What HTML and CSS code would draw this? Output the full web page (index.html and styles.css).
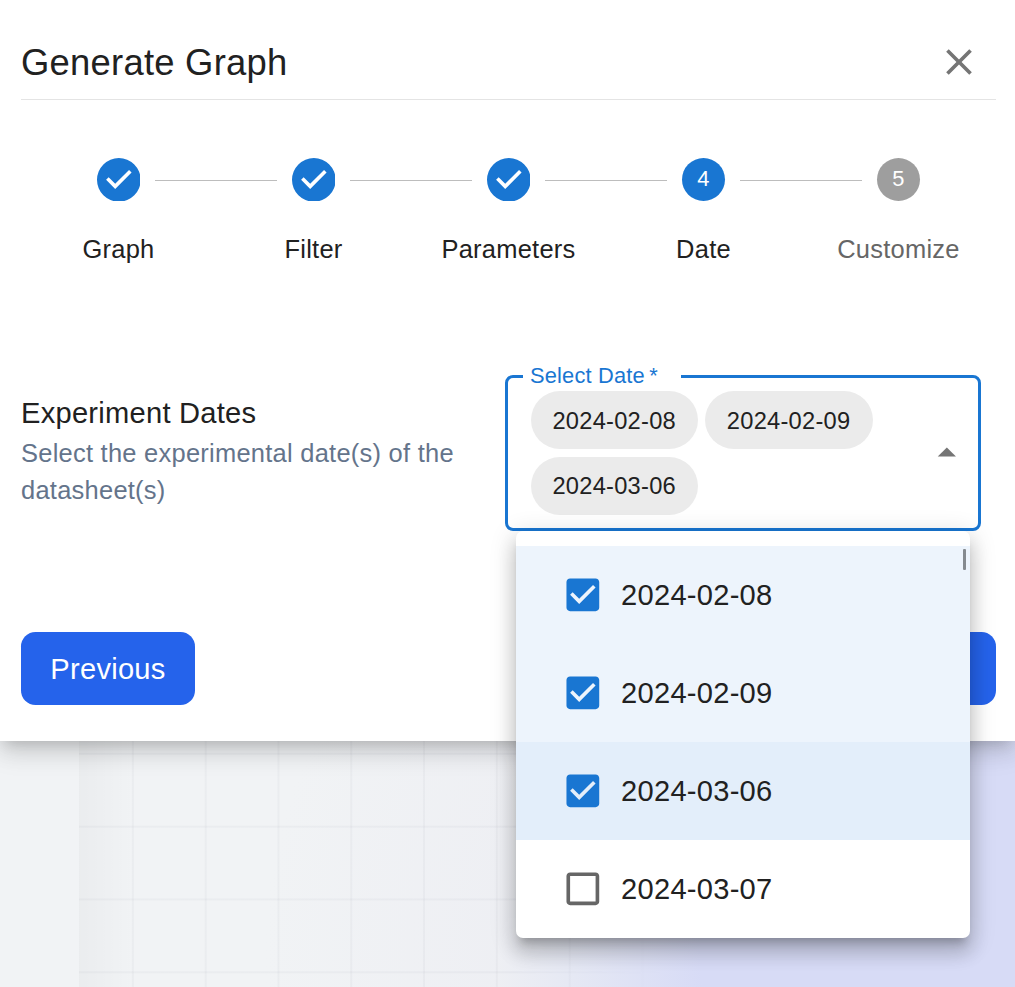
FILE: index.html
```html
<!DOCTYPE html>
<html lang="en">
<head>
<meta charset="utf-8">
<title>Generate Graph</title>
<link rel="stylesheet" href="styles.css">
</head>
<body>
<div class="backdrop"><div class="rail"></div><div class="canvas"><div class="grid"></div></div></div>
<main class="modal">
  <header class="header">
    <h1 class="title">Generate Graph</h1>
    <svg class="close" viewBox="0 0 24 24"><path d="M19 6.41 17.59 5 12 10.59 6.41 5 5 6.41 10.59 12 5 17.59 6.41 19 12 13.41 17.59 19 19 17.59 13.41 12z"/></svg>
  </header>
  <ol class="stepper">
    <li class="step"><svg class="step-icon" viewBox="0 0 24 24"><path d="M12 0a12 12 0 1 0 0 24 12 12 0 0 0 0-24zm-2 17l-5-5 1.4-1.4 3.6 3.6 7.6-7.6L19 8l-9 9z"/></svg><span class="step-label">Graph</span></li>
    <li class="step"><svg class="step-icon" viewBox="0 0 24 24"><path d="M12 0a12 12 0 1 0 0 24 12 12 0 0 0 0-24zm-2 17l-5-5 1.4-1.4 3.6 3.6 7.6-7.6L19 8l-9 9z"/></svg><span class="step-label">Filter</span></li>
    <li class="step"><svg class="step-icon" viewBox="0 0 24 24"><path d="M12 0a12 12 0 1 0 0 24 12 12 0 0 0 0-24zm-2 17l-5-5 1.4-1.4 3.6 3.6 7.6-7.6L19 8l-9 9z"/></svg><span class="step-label">Parameters</span></li>
    <li class="step"><span class="step-icon number">4</span><span class="step-label">Date</span></li>
    <li class="step pending"><span class="step-icon number">5</span><span class="step-label">Customize</span></li>
  </ol>
  <section class="field-row">
    <div class="description">
      <h2 class="field-title">Experiment Dates</h2>
      <p class="field-help">Select the experimental date(s) of the datasheet(s)</p>
    </div>
    <div class="select">
      <span class="select-label">Select Date&#8201;*</span>
      <div class="chips"><span class="chip">2024-02-08</span><span class="chip">2024-02-09</span><span class="chip">2024-03-06</span></div>
      <svg class="arrow" viewBox="0 0 24 24"><path d="M7 14l5-5 5 5z"/></svg>
      <div class="menu">
        <div class="option selected"><svg class="check" viewBox="0 0 24 24"><path d="M19 3H5c-1.11 0-2 .9-2 2v14c0 1.1.89 2 2 2h14c1.11 0 2-.9 2-2V5c0-1.1-.89-2-2-2zm-9 14l-5-5 1.41-1.41L10 14.17l7.59-7.59L19 8l-9 9z"/></svg>2024-02-08</div>
        <div class="option selected"><svg class="check" viewBox="0 0 24 24"><path d="M19 3H5c-1.11 0-2 .9-2 2v14c0 1.1.89 2 2 2h14c1.11 0 2-.9 2-2V5c0-1.1-.89-2-2-2zm-9 14l-5-5 1.41-1.41L10 14.17l7.59-7.59L19 8l-9 9z"/></svg>2024-02-09</div>
        <div class="option selected focused"><svg class="check" viewBox="0 0 24 24"><path d="M19 3H5c-1.11 0-2 .9-2 2v14c0 1.1.89 2 2 2h14c1.11 0 2-.9 2-2V5c0-1.1-.89-2-2-2zm-9 14l-5-5 1.41-1.41L10 14.17l7.59-7.59L19 8l-9 9z"/></svg>2024-03-06</div>
        <div class="option"><svg class="check" viewBox="0 0 24 24"><path d="M19 5v14H5V5h14m0-2H5c-1.1 0-2 .9-2 2v14c0 1.1.9 2 2 2h14c1.1 0 2-.9 2-2V5c0-1.1-.9-2-2-2z"/></svg>2024-03-07</div>
        <span class="thumb"></span>
      </div>
    </div>
  </section>
  <footer class="actions"><button class="button">Previous</button><button class="button next" aria-label="Next"></button></footer>
</main>
</body>
</html>
```
FILE: styles.css
```css
* { box-sizing: border-box; }
body {
  margin: 0;
  height: 987px;
  overflow: hidden;
  position: relative;
  font-family: "Liberation Sans", Arial, sans-serif;
  font-size: 29.12px;
  letter-spacing: 0.25px;
  color: #212121;
}
h1, h2, p, ol { margin: 0; padding: 0; font-weight: 400; }
svg { display: block; fill: currentColor; }

.backdrop {
  position: absolute;
  inset: 0;
  display: flex;
  background: #f1f3f5;
}
.rail { width: 79px; }
.canvas {
  flex: 1;
  background:
    linear-gradient(90deg, rgba(0, 0, 0, 0.028), transparent 55px),
    radial-gradient(ellipse 520px 460px at 861px 960px, #d7dbf6 0, #d7dbf6 46%, #e6e9f4 72%, rgba(237, 238, 243, 0.8) 85%, rgba(241, 243, 245, 0) 130%);
}
.grid {
  height: 100%;
  background:
    linear-gradient(90deg, transparent 53px, rgba(60, 65, 90, 0.035) 53px, rgba(60, 65, 90, 0.035) 55px, transparent 55px) 0 0 / 72.8px 100%,
    linear-gradient(180deg, transparent 25px, rgba(60, 65, 90, 0.035) 25px, rgba(60, 65, 90, 0.035) 27px, transparent 27px) 0 0 / 100% 72.8px;
  mask-image: linear-gradient(90deg, #000 430px, transparent 590px);
}

.modal {
  position: relative;
  height: 741px;
  padding: 0 19px 0 21px;
  background: #fff;
  box-shadow: 0 9px 12px -6px rgba(0, 0, 0, 0.13), 0 13px 24px 0 rgba(0, 0, 0, 0.1), 0 5.5px 25px 3.6px rgba(0, 0, 0, 0.07);
}
.header {
  height: 100px;
  padding: 26px 15px 0 0;
  display: flex;
  justify-content: space-between;
  align-items: center;
  border-bottom: 1px solid #e4e4e4;
}
.title { font-size: 36.4px; letter-spacing: 0.25px; line-height: 58px; }
.close { width: 44px; height: 44px; color: #757575; margin-top: -1px; }

.stepper {
  list-style: none;
  display: grid;
  grid-template-columns: repeat(5, 1fr);
  padding-top: 57.6px;
  height: 274px;
}
.step {
  position: relative;
  display: flex;
  flex-direction: column;
  align-items: center;
  gap: 29.4px;
  font-size: 25.48px;
}
.step + .step::before {
  content: "";
  position: absolute;
  left: calc(-50% + 36.5px);
  right: calc(50% + 36.5px);
  top: 22.4px;
  height: 1px;
  background: #bdbdbd;
}
.step-icon { width: 43.7px; height: 43.7px; color: #1976d2; }
.number {
  display: flex;
  align-items: center;
  justify-content: center;
  border-radius: 50%;
  background: #1976d2;
  color: #fff;
  font-size: 21.84px;
}
.step-label { line-height: 37px; }
.pending { color: #666; }
.pending .number { background: #9e9e9e; }

.field-row {
  display: flex;
  justify-content: space-between;
  height: 258px;
  padding: 1px 15px 0 0;
}
.description { width: 460px; padding-top: 16px; }
.field-title { font-size: 29.12px; line-height: 44px; }
.field-help { font-size: 25.48px; line-height: 37px; color: #64748b; }

.select {
  position: relative;
  width: 476px;
  height: 156px;
  border: 3px solid #1976d2;
  border-radius: 8px;
  padding: 13px 90px 0 23px;
}
.select-label {
  position: absolute;
  left: 15px;
  top: -15px;
  width: 158px;
  padding-left: 7px;
  line-height: 25px;
  background: #fff;
  color: #1976d2;
  font-size: 21.84px;
  letter-spacing: 0.18px;
}
.chips { display: flex; flex-wrap: wrap; gap: 7.3px 7px; }
.chip {
  height: 58.3px;
  width: 167.4px;
  padding: 2px 1px 0 0;
  border-radius: 29px;
  background: #ebebeb;
  display: flex;
  align-items: center;
  justify-content: center;
  font-size: 23.66px;
}
.arrow {
  position: absolute;
  right: 9.5px;
  top: 52.5px;
  width: 43.7px;
  height: 43.7px;
  color: #757575;
}
.menu {
  position: absolute;
  z-index: 2;
  left: 8px;
  top: 153px;
  width: 454px;
  padding-top: 15px;
  border-radius: 7px;
  background: #fff;
  overflow: hidden;
  box-shadow: 0 9px 9px -5.5px rgba(0, 0, 0, 0.2), 0 14.6px 18px 2px rgba(0, 0, 0, 0.14), 0 5.5px 25px 3.6px rgba(0, 0, 0, 0.12);
}
.option {
  height: 98px;
  padding-left: 45px;
  display: flex;
  align-items: center;
  gap: 16.4px;
}
.check { width: 43.7px; height: 43.7px; color: #666; }
.selected { background: #edf4fc; }
.focused { background: #e3eefa; }
.selected .check { color: #1976d2; }
.thumb {
  position: absolute;
  right: 4px;
  top: 18px;
  width: 3px;
  height: 21px;
  border-radius: 1px;
  background: #858a8f;
}

.actions { display: flex; justify-content: space-between; }
.button {
  width: 174px;
  height: 73px;
  padding: 2px 0 0;
  border: 0;
  border-radius: 14.5px;
  background: #2563eb;
  color: #fff;
  font: inherit;
  letter-spacing: inherit;
}
```
